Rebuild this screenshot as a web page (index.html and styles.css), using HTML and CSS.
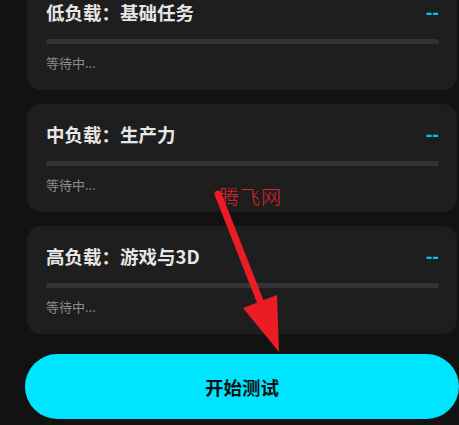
FILE: index.html
```html
<!DOCTYPE html>
<html lang="zh-CN">
<head>
    <meta charset="UTF-8">
    <meta name="viewport" content="width=device-width, initial-scale=1.0">
    <title>性能测试</title>
    <link rel="stylesheet" href="styles.css">
</head>

<body>
    <div class="screen">
        <div class="test-list">
            <div class="test-card">
                <div class="test-head">
                    <h2>低负载：基础任务</h2>
                    <span class="score">--</span>
                </div>
                <div class="track"><div class="fill"></div></div>
                <p class="state">等待中...</p>
            </div>
            <div class="test-card">
                <div class="test-head">
                    <h2>中负载：生产力</h2>
                    <span class="score">--</span>
                </div>
                <div class="track"><div class="fill"></div></div>
                <p class="state">等待中...</p>
            </div>
            <div class="test-card">
                <div class="test-head">
                    <h2>高负载：游戏与3D</h2>
                    <span class="score">--</span>
                </div>
                <div class="track"><div class="fill"></div></div>
                <p class="state">等待中...</p>
            </div>
        </div>

        <button class="start-btn">开始测试</button>
    </div>

    <!-- annotation overlay -->
    <div class="watermark">腾飞网</div>
    <svg class="arrow" width="459" height="425" viewBox="0 0 459 425">
        <line x1="218" y1="194" x2="262" y2="306" stroke="#ec1c24" stroke-width="7" stroke-linecap="round"/>
        <polygon points="243,308 277,295 279,352" fill="#ec1c24"/>
    </svg>
</body>
</html>
```

FILE: styles.css
```css
body {
    font-family: "Noto Sans CJK SC", "Noto Sans", sans-serif;
    margin: 0;
    background-color: #121212;
    width: 459px;
    height: 425px;
    overflow: hidden;
    position: relative;
}

.screen {
    display: flex;
    flex-direction: column;
}

.test-list {
    display: flex;
    flex-direction: column;
    gap: 14px;
    margin-top: -18px;
    margin-left: 27px;
    width: 430px;
}

.test-card {
    background-color: #1e1e1e;
    border-radius: 14px;
    padding: 18px 18px 18px 19px;
    box-sizing: border-box;
    height: 108px;
}

.test-head {
    display: flex;
    justify-content: space-between;
    align-items: center;
    height: 24px;
}

.test-head h2 {
    margin: 0;
    font-size: 18.5px;
    line-height: 24px;
    font-weight: bold;
    color: #e6e6e6;
}

.score {
    font-family: "DejaVu Sans", sans-serif;
    font-size: 16px;
    font-weight: bold;
    color: #00c8e2;
    line-height: 12px;
    margin-top: 1px;
}

.track {
    margin-top: 15px;
    height: 5px;
    border-radius: 3px;
    background-color: #333333;
    overflow: hidden;
}

.fill {
    width: 0;
    height: 100%;
    background-color: #00e5ff;
}

.state {
    margin: 10px 0 0 0;
    font-size: 13px;
    line-height: 18px;
    color: #8c8c8c;
}

.start-btn {
    margin-top: 20px;
    margin-left: 25px;
    width: 434px;
    height: 65px;
    border: none;
    border-radius: 33px;
    background-color: #00e5ff;
    color: #111111;
    font-family: inherit;
    font-size: 18.5px;
    font-weight: bold;
    padding: 0;
}

.watermark {
    position: absolute;
    left: 219px;
    top: 184px;
    font-size: 20px;
    line-height: 26px;
    font-weight: 300;
    color: #d9252b;
    letter-spacing: 1px;
}

.arrow {
    position: absolute;
    left: 0;
    top: 0;
}
```
